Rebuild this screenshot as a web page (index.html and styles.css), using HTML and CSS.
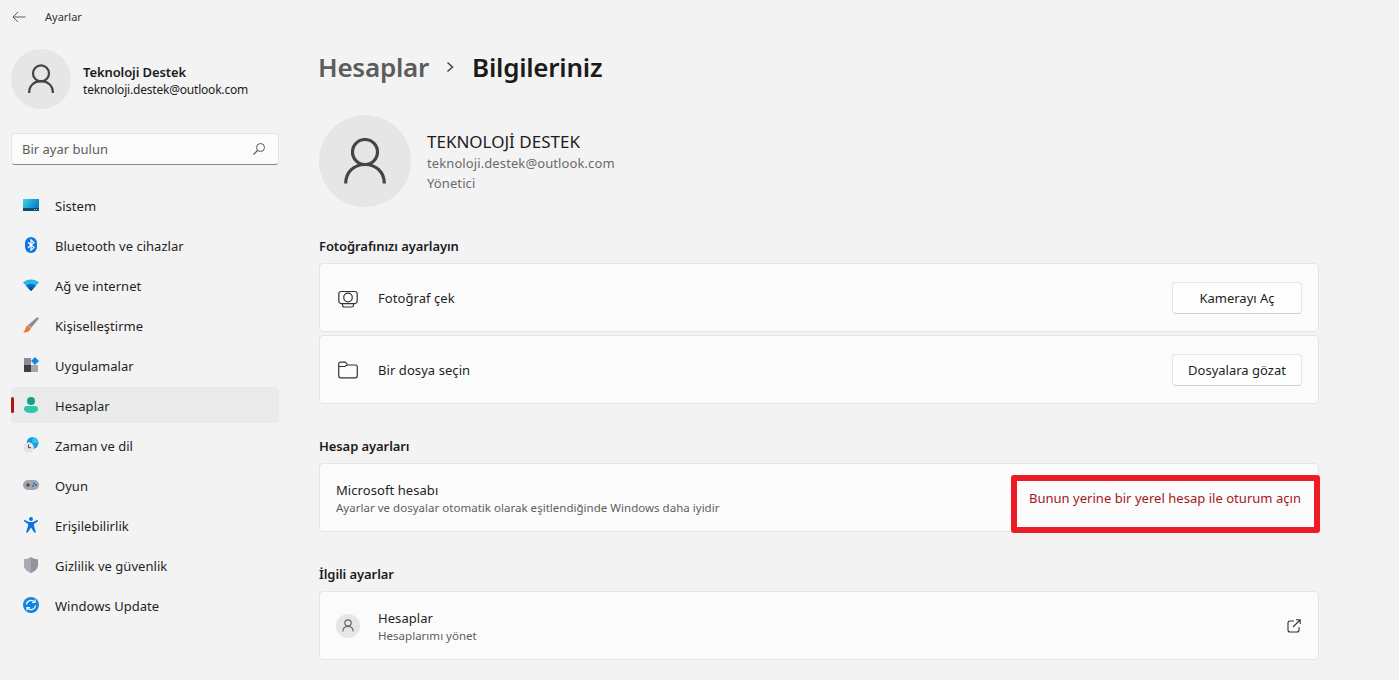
FILE: index.html
```html
<!DOCTYPE html>
<html lang="tr">
<head>
<meta charset="utf-8">
<title>Ayarlar</title>
<link rel="stylesheet" href="styles.css">
</head>
<body>
<header class="titlebar">
  <svg class="back" width="14" height="12" viewBox="0 0 14 12"><path d="M13.500 6H1M6 1 1 6l5 5" fill="none" stroke="#5a5a5a" stroke-width="1"/></svg>
  <span class="app-name">Ayarlar</span>
</header>
<div class="app">
  <aside class="sidebar">
    <div class="profile">
      <div class="avatar avatar-md">
        <svg width="26" height="30" viewBox="0 0 28 32"><circle cx="14" cy="10" r="8.600" fill="none" stroke="#444" stroke-width="2.400"/><path d="M1.200 31c0-8 5.500-12.600 12.800-12.600S26.800 23 26.800 31" fill="none" stroke="#444" stroke-width="2.400"/></svg>
      </div>
      <div class="profile-text">
        <div class="profile-name">Teknoloji Destek</div>
        <div class="profile-mail">teknoloji.destek@outlook.com</div>
      </div>
    </div>
    <div class="search">
      <span>Bir ayar bulun</span>
      <svg width="14" height="14" viewBox="0 0 14 14"><circle cx="8.500" cy="5.500" r="4" fill="none" stroke="#555" stroke-width="1"/><path d="M5.500 8.500 1.500 12.500" stroke="#555" stroke-width="1.200"/></svg>
    </div>
    <nav class="nav">
      <a class="nav-item"><svg class="nav-icon" viewBox="0 0 16 16"><defs><linearGradient id="g1" x1="0" y1="0" x2="1" y2="0.400"><stop offset="0" stop-color="#3bd5e8"/><stop offset="1" stop-color="#0a84c8"/></linearGradient></defs><rect x="0" y="2" width="16" height="9" fill="url(#g1)"/><rect x="0" y="11" width="16" height="3" fill="#0f4e6e"/><rect x="11" y="12" width="1" height="1" fill="#9cc"/><rect x="13" y="12" width="1" height="1" fill="#9cc"/></svg><span>Sistem</span></a>
      <a class="nav-item"><svg class="nav-icon" viewBox="0 0 16 16"><rect x="2" y="0" width="12" height="16" rx="6" fill="#0a78e0"/><path d="M5 5.200 11 10.600 8 13.200V2.800l3 2.600L5 10.800" fill="none" stroke="#fff" stroke-width="1.200"/></svg><span>Bluetooth ve cihazlar</span></a>
      <a class="nav-item"><svg class="nav-icon" viewBox="0 0 16 16"><path d="M0 5.500C4 1.500 12 1.500 16 5.500L8 14Z" fill="#29b6ea"/><path d="M3 8.700C5.500 6.300 10.500 6.300 13 8.700L8 14Z" fill="#0f6cc4"/><path d="M5.300 11C6.800 9.800 9.200 9.800 10.700 11L8 14Z" fill="#0a4ea0"/></svg><span>Ağ ve internet</span></a>
      <a class="nav-item"><svg class="nav-icon" viewBox="0 0 16 16"><path d="M14.500 0 16 1.500 8 11 5 8Z" fill="#8a8f96"/><path d="M4.600 8.300 7.800 11.300C7.300 14.300 3.500 16 0 15.500 2.500 14 2 10 4.600 8.300Z" fill="#ee7b2a"/></svg><span>Kişiselleştirme</span></a>
      <a class="nav-item"><svg class="nav-icon" viewBox="0 0 16 16"><rect x="1" y="1" width="7" height="7" fill="#8b8f94"/><rect x="1" y="8" width="7" height="7" fill="#3c4045"/><rect x="8" y="8" width="7" height="7" fill="#a5a8ac"/><path d="M12 0 16 4 12 8 8 4Z" fill="#1488dc"/></svg><span>Uygulamalar</span></a>
      <a class="nav-item active"><svg class="nav-icon" viewBox="0 0 16 16"><circle cx="8" cy="4" r="4" fill="#12a08c"/><path d="M1 12c0-2 1-3 3-3h8c2 0 3 1 3 3v0c0 2.500-3 4-7 4s-7-1.500-7-4Z" fill="#2dc7ae"/></svg><span>Hesaplar</span></a>
      <a class="nav-item"><svg class="nav-icon" viewBox="0 0 16 16"><circle cx="9.500" cy="6" r="6" fill="#1a9be0"/><path d="M9.500 0a6 6 0 0 1 6 6h-6Z" fill="#3bc0ee"/><circle cx="5.500" cy="10.500" r="5.300" fill="#e3e4e6"/><path d="M5.500 7.500v3.200h2.500" fill="none" stroke="#444" stroke-width="1"/></svg><span>Zaman ve dil</span></a>
      <a class="nav-item"><svg class="nav-icon" viewBox="0 0 16 16"><rect x="0" y="3" width="16" height="10" rx="5" fill="#a2a6ac"/><path d="M3 8h4M5 6v4" stroke="#333" stroke-width="1"/><circle cx="11" cy="6.500" r="1" fill="#1478c8"/><circle cx="10" cy="9" r="1" fill="#1478c8"/><circle cx="13" cy="8" r="1" fill="#1478c8"/></svg><span>Oyun</span></a>
      <a class="nav-item"><svg class="nav-icon" viewBox="0 0 16 16"><circle cx="8" cy="2" r="2" fill="#0a78d8"/><path d="M1.500 2.800 6 5h4l4.500-2.200.6 1.400L11 7v2l2 6.500h-1.800L8 10.500 4.800 15.500H3L5 9V7L.9 4.200Z" fill="#0a78d8"/></svg><span>Erişilebilirlik</span></a>
      <a class="nav-item"><svg class="nav-icon" viewBox="0 0 16 16"><path d="M8 0C10 1.500 12.500 2.300 15 2.300V8c0 3.500-3 6.500-7 8-4-1.500-7-4.500-7-8V2.300C3.500 2.300 6 1.500 8 0Z" fill="#8f949a"/><path d="M8 0v16c-4-1.500-7-4.500-7-8V2.300C3.500 2.300 6 1.500 8 0Z" fill="#a8acb1"/></svg><span>Gizlilik ve güvenlik</span></a>
      <a class="nav-item"><svg class="nav-icon" viewBox="0 0 16 16"><circle cx="8" cy="8" r="8" fill="#0f86df"/><path d="M3.500 7.500A4.600 4.600 0 0 1 11.500 5M12.500 8.500A4.600 4.600 0 0 1 4.500 11" fill="none" stroke="#fff" stroke-width="1.200"/><path d="M12 2.500v3H9M4 13.500v-3h3" fill="none" stroke="#fff" stroke-width="1.200"/></svg><span>Windows Update</span></a>
    </nav>
  </aside>
  <main class="content">
    <h1 class="breadcrumb">
      <span class="crumb-parent">Hesaplar</span>
      <svg class="crumb-sep" width="9" height="12" viewBox="0 0 9 12"><path d="M1.500 1.500 6.500 6l-5 4.500" fill="none" stroke="#444" stroke-width="1.500"/></svg>
      <span>Bilgileriniz</span>
    </h1>
    <section class="hero">
      <div class="avatar avatar-lg">
        <svg width="42" height="46" viewBox="0 0 42 46"><circle cx="21" cy="14" r="12.500" fill="none" stroke="#444" stroke-width="3.200"/><path d="M1.700 45.500c0-11.500 8.300-19 19.300-19s19.300 7.500 19.300 19" fill="none" stroke="#444" stroke-width="3.200"/></svg>
      </div>
      <div class="hero-text">
        <div class="hero-name">TEKNOLOJİ DESTEK</div>
        <div class="hero-sub">teknoloji.destek@outlook.com</div>
        <div class="hero-sub">Yönetici</div>
      </div>
    </section>
    <h2 class="section-title first">Fotoğrafınızı ayarlayın</h2>
    <div class="stack">
      <div class="card">
        <svg class="row-icon" viewBox="0 0 20 20"><path d="M3 3.500h14a2.200 2.200 0 0 1 2.200 2.200v7a3 3 0 0 1-3 3H3.800a3 3 0 0 1-3-3v-7A2.200 2.200 0 0 1 3 3.500ZM4.500 15.700v1.500a1.800 1.800 0 0 0 1.800 1.800h7.400a1.800 1.800 0 0 0 1.800-1.800v-1.500" fill="none" stroke="#333" stroke-width="1.200"/><circle cx="10" cy="9.500" r="4.300" fill="none" stroke="#333" stroke-width="1.200"/></svg>
        <span class="row-label">Fotoğraf çek</span>
        <button class="btn">Kamerayı Aç</button>
      </div>
      <div class="card">
        <svg class="row-icon" viewBox="0 0 20 20"><path d="M.7 3.800V16A1.800 1.800 0 0 0 2.500 17.800h15A1.800 1.800 0 0 0 19.300 16V6.800A1.800 1.800 0 0 0 17.500 5H9.500L8 2.800A1 1 0 0 0 7 2.200H2.300A1.600 1.600 0 0 0 .7 3.800ZM.7 6.500H6.500L9.500 5" fill="none" stroke="#333" stroke-width="1.200"/></svg>
        <span class="row-label">Bir dosya seçin</span>
        <button class="btn">Dosyalara gözat</button>
      </div>
    </div>
    <h2 class="section-title">Hesap ayarları</h2>
    <div class="card card-plain">
      <div>
        <div class="row-label">Microsoft hesabı</div>
        <div class="row-sub">Ayarlar ve dosyalar otomatik olarak eşitlendiğinde Windows daha iyidir</div>
      </div>
      <a class="link">Bunun yerine bir yerel hesap ile oturum açın</a>
      <div class="callout"></div>
    </div>
    <h2 class="section-title">İlgili ayarlar</h2>
    <div class="card">
      <div class="mini-avatar">
        <svg width="12" height="13" viewBox="0 0 12 13"><circle cx="6" cy="4" r="3.200" fill="none" stroke="#666" stroke-width="1.200"/><path d="M.8 12.500c0-3 2.200-5.200 5.200-5.200s5.200 2.200 5.200 5.200" fill="none" stroke="#666" stroke-width="1.200"/></svg>
      </div>
      <div>
        <div class="row-label">Hesaplar</div>
        <div class="row-sub">Hesaplarımı yönet</div>
      </div>
      <svg class="ext" width="14" height="14" viewBox="0 0 14 14"><path d="M7 2H3a2 2 0 0 0-2 2v7a2 2 0 0 0 2 2h7a2 2 0 0 0 2-2V8M6 8 13 1M9 .8h4.200V5" fill="none" stroke="#333" stroke-width="1.100"/></svg>
    </div>
  </main>
</div>
</body>
</html>
```
FILE: styles.css
```css
* { box-sizing: border-box; }
html, body { margin: 0; height: 680px; overflow: hidden; }
body {
  background: #f3f3f3;
  color: #1b1b1b;
  font-family: "Noto Sans", "Open Sans", sans-serif;
  font-size: 13px;
}
.titlebar {
  height: 33px;
  display: flex;
  align-items: center;
  padding-left: 12px;
  gap: 19px;
}
.app-name { font-size: 11px; color: #333; }
.app { display: flex; }
.sidebar { width: 290px; padding: 16px 0 0 11px; flex: none; }
.profile { display: flex; align-items: center; gap: 12px; height: 60px; }
.avatar {
  border-radius: 50%;
  background: #e6e6e6;
  display: flex;
  align-items: center;
  justify-content: center;
  flex: none;
}
.avatar-md { width: 60px; height: 60px; }
.avatar-lg { width: 92px; height: 92px; }
.profile-text { padding-top: 3px; }
.profile-name { font-size: 13px; font-weight: 600; line-height: 18px; letter-spacing: -0.1px; }
.profile-mail { font-size: 12px; line-height: 18px; letter-spacing: -0.2px; }
.search {
  width: 268px;
  height: 32px;
  margin-top: 24px;
  padding: 0 12px 0 10px;
  display: flex;
  align-items: center;
  justify-content: space-between;
  background: #fbfbfb;
  border: 1px solid #e5e5e5;
  border-bottom-color: #8a8a8a;
  border-radius: 4px;
  color: #5d5d5d;
  font-size: 13px;
}
.nav { width: 268px; margin-top: 22px; display: flex; flex-direction: column; gap: 4px; }
.nav-item {
  height: 36px;
  position: relative;
  display: flex;
  align-items: center;
  gap: 16px;
  padding-left: 12px;
  border-radius: 4px;
  font-size: 13px;
  color: #1f1f1f;
  letter-spacing: 0.03px;
}
.nav-item span { padding-top: 2px; }
.nav-icon { width: 16px; height: 16px; flex: none; }
.nav-item.active { background: #eaeaea; }
.nav-item.active::before {
  content: "";
  position: absolute;
  left: 0;
  top: 10px;
  width: 3px;
  height: 16px;
  background: #b3130f;
  border-radius: 2px;
}
.content { width: 1000px; margin-left: 29px; flex: none; }
.breadcrumb {
  margin: 0 0 0 -1px;
  height: 36px;
  margin-top: 16px;
  display: flex;
  align-items: center;
  gap: 17px;
  font-size: 26px;
  font-weight: 600;
  line-height: 36px;
  letter-spacing: -0.25px;
}
.crumb-parent { color: #5c5c5c; }
.hero { display: flex; align-items: center; gap: 16px; margin-top: 30px; }
.hero-name { font-size: 17px; line-height: 24px; padding-top: 1px; margin-bottom: -1px; }
.hero-sub { font-size: 13px; line-height: 20px; color: #6a6a6a; letter-spacing: 0.1px; }
.section-title {
  margin: 33px 0 8px;
  font-size: 13px;
  font-weight: 600;
  line-height: 18px;
  letter-spacing: -0.08px;
}
.section-title.first { margin-top: 30px; }
.stack { display: flex; flex-direction: column; gap: 3px; }
.card {
  position: relative;
  height: 69px;
  display: flex;
  align-items: center;
  gap: 20px;
  padding: 0 16px 0 18px;
  background: #fbfbfb;
  border: 1px solid #e5e5e5;
  border-radius: 4px;
}
.card-plain { padding-left: 16px; justify-content: space-between; }
.row-icon { width: 20px; height: 20px; flex: none; }
.row-label { font-size: 13px; line-height: 18px; color: #1f1f1f; letter-spacing: 0.07px; }
.row-sub { font-size: 11.5px; line-height: 16px; color: #5e5e5e; letter-spacing: 0.02px; padding-top: 1px; margin-bottom: -1px; }
.btn {
  margin-left: auto;
  width: 130px;
  height: 32px;
  padding: 0;
  background: #fefefe;
  border: 1px solid #e5e5e5;
  border-bottom-color: #cfcfcf;
  border-radius: 4px;
  font: inherit;
  font-size: 13px;
  color: #1f1f1f;
}
.link {
  color: #9f1a1c;
  font-size: 13px;
  letter-spacing: 0.03px;
  margin-right: 1px;
  margin-top: -1px;
  align-self: flex-start;
  padding-top: 26px;
}
.callout {
  position: absolute;
  left: 691px;
  right: -2px;
  top: 11px;
  bottom: -2px;
  border: 6px solid #ed1c24;
  border-radius: 3px;
}
.mini-avatar {
  width: 24px;
  height: 24px;
  margin: 0 -2px;
  border-radius: 50%;
  background: #e6e6e6;
  display: flex;
  align-items: center;
  justify-content: center;
  flex: none;
}
.ext { margin-left: auto; margin-right: 1px; }
```
